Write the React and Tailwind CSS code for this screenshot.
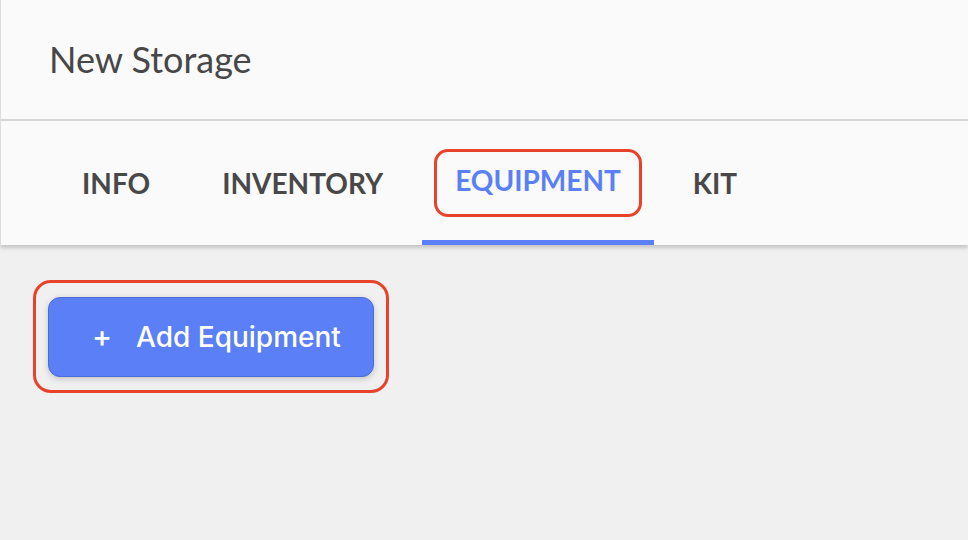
export default function App() {
  const tabs = ['INFO', 'INVENTORY', 'EQUIPMENT', 'KIT']
  const active = 'EQUIPMENT'

  return (
    <div className="w-[968px] h-[540px] overflow-hidden bg-[#f0f0f0] font-['Lato','Noto_Sans',sans-serif]">
      <div className="bg-[#fafafa] border-l border-[#dcdcdc] shadow-[0_3px_4px_rgba(0,0,0,0.18)]">
        <div className="h-[121px] flex items-center pl-[48px] border-b-2 border-[#d6d6d6]">
          <h1 className="text-[36px] text-[#474747] leading-none -mt-[1px]">New Storage</h1>
        </div>
        <div className="flex h-[124px] pl-[48px] gap-[6px]">
          {tabs.map((t) => {
            const on = t === active
            return (
              <div
                key={t}
                className={`relative flex items-center px-[33px] border-b-[5px] ${on ? 'border-[#5b7ff7]' : 'border-transparent'}`}
              >
                <span
                  className={`text-[28px] font-bold leading-none ${on ? 'text-[#5b7ff7] -mt-[1px]' : 'text-[#484848] mt-[4px]'}`}
                >
                  {t}
                </span>
                {on && (
                  <div className="absolute left-[12px] right-[12px] top-[28px] h-[68px] rounded-[14px] border-[3px] border-[#e8432a]" />
                )}
              </div>
            )
          })}
        </div>
      </div>

      <div className="pt-[52px] pl-[48px]">
        <div className="relative inline-block">
          <button className="flex items-center h-[80px] w-[326px] rounded-[12px] bg-[#5b7ff7] border border-[#4b6ad6] shadow-[0_2px_6px_rgba(0,0,0,0.18)] pl-[43px] text-white font-['Inter',sans-serif] font-medium">
            <span className="text-[30px] leading-none mr-[24px] -mt-[3px]">+</span>
            <span className="text-[28px] leading-none">Add Equipment</span>
          </button>
          <div className="absolute -left-[15px] -top-[17px] w-[356px] h-[113px] rounded-[18px] border-[3px] border-[#e8432a]" />
        </div>
      </div>
    </div>
  )
}
